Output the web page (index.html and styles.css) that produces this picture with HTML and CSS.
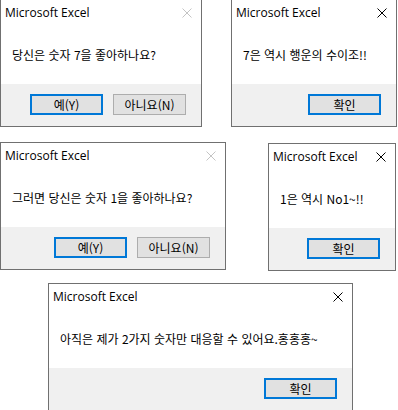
FILE: index.html
```html
<!DOCTYPE html>
<html lang="ko">
<head>
<meta charset="utf-8">
<link rel="stylesheet" href="styles.css">
</head>
<body>
<div class="desk">
  <div class="dlg d1">
    <div class="title"><span>Microsoft Excel</span><svg class="close off" width="10" height="10" viewBox="0 0 10 10"><path d="M0.5 0.5L9.5 9.5M9.5 0.5L0.5 9.5"/></svg></div>
    <div class="body">당신은 숫자 7을 좋아하나요?</div>
    <div class="foot"><button class="btn def">예(Y)</button><button class="btn">아니요(N)</button></div>
  </div>
  <div class="dlg d2">
    <div class="title"><span>Microsoft Excel</span><svg class="close" width="10" height="10" viewBox="0 0 10 10"><path d="M0.5 0.5L9.5 9.5M9.5 0.5L0.5 9.5"/></svg></div>
    <div class="body">7은 역시 행운의 수이조!!</div>
    <div class="foot"><button class="btn def">확인</button></div>
  </div>
  <div class="dlg d3">
    <div class="title"><span>Microsoft Excel</span><svg class="close off" width="10" height="10" viewBox="0 0 10 10"><path d="M0.5 0.5L9.5 9.5M9.5 0.5L0.5 9.5"/></svg></div>
    <div class="body">그러면 당신은 숫자 1을 좋아하나요?</div>
    <div class="foot"><button class="btn def">예(Y)</button><button class="btn">아니요(N)</button></div>
  </div>
  <div class="dlg d4">
    <div class="title"><span>Microsoft Excel</span><svg class="close" width="10" height="10" viewBox="0 0 10 10"><path d="M0.5 0.5L9.5 9.5M9.5 0.5L0.5 9.5"/></svg></div>
    <div class="body">1은 역시 No1~!!</div>
    <div class="foot"><button class="btn def">확인</button></div>
  </div>
  <div class="dlg d5">
    <div class="title"><span>Microsoft Excel</span><svg class="close" width="10" height="10" viewBox="0 0 10 10"><path d="M0.5 0.5L9.5 9.5M9.5 0.5L0.5 9.5"/></svg></div>
    <div class="body">아직은 제가 2가지 숫자만 대응할 수 있어요.홍홍홍~</div>
    <div class="foot"><button class="btn def">확인</button></div>
  </div>
</div>
</body>
</html>
```

FILE: styles.css
```css
html, body {
  margin: 0;
  padding: 0;
  background: #ffffff;
  overflow: hidden;
}
.desk {
  position: relative;
  width: 398px;
  height: 410px;
  overflow: hidden;
  font-family: "Noto Sans CJK KR", "Noto Sans", sans-serif;
  color: #000;
}
.dlg {
  position: absolute;
  box-sizing: border-box;
  height: 128px;
  border: 1px solid #707070;
  background: #ffffff;
  display: flex;
  flex-direction: column;
}
.d1 { left: 0; top: -1px; width: 202px; }
.d2 { left: 231px; top: -1px; width: 166px; }
.d3 { left: 0; top: 142px; width: 226px; }
.d4 { left: 268px; top: 143px; width: 128px; }
.d5 { left: 48px; top: 283px; width: 305px; }

.title {
  height: 25px;
  display: flex;
  align-items: center;
  justify-content: space-between;
  padding-left: 4px;
  font-family: "Open Sans", "Noto Sans", sans-serif;
  font-size: 12px;
  line-height: 25px;
}
.close {
  margin-right: 9px;
  flex: none;
}
.close path {
  stroke: #000;
  stroke-width: 1;
  fill: none;
}
.close.off path {
  stroke: #c4c4c4;
}
.body {
  flex: 1;
  padding: 21px 0 0 11px;
  font-size: 12px;
  line-height: 18px;
  white-space: nowrap;
}
.foot {
  height: 42px;
  box-sizing: border-box;
  background: #f0f0f0;
  display: flex;
  justify-content: flex-end;
  align-items: flex-start;
  gap: 10px;
  padding: 10px 15px 0 0;
}
.btn {
  box-sizing: border-box;
  width: 73px;
  height: 21px;
  margin: 0;
  padding: 0;
  background: #e1e1e1;
  border: 1px solid #adadad;
  font-family: "Noto Sans CJK KR", sans-serif;
  font-size: 12px;
  line-height: 17px;
  color: #000;
}
.btn.def {
  border: 2px solid #0078d7;
}
```
